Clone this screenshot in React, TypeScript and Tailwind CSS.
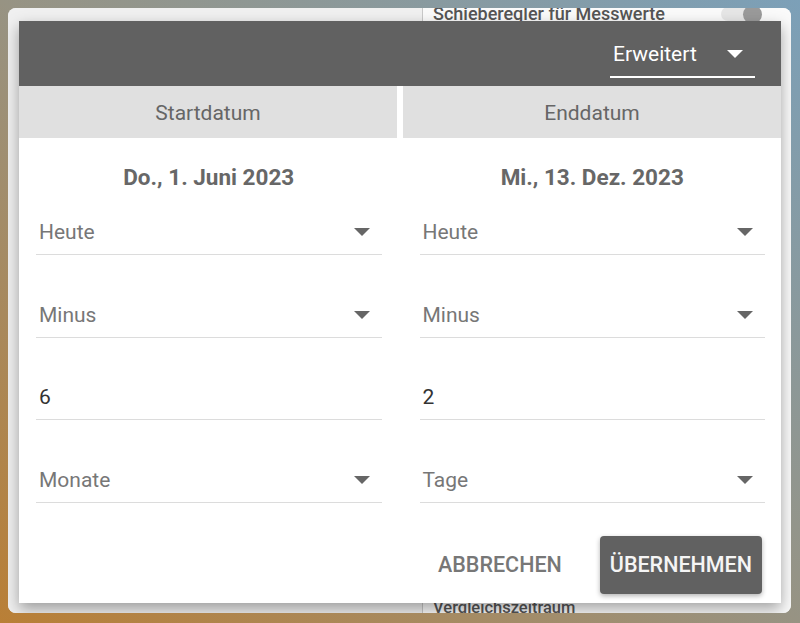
import React from "react";

function Tri({ color }: { color: string }) {
  return (
    <svg width="16" height="8" viewBox="0 0 16 8" className="shrink-0">
      <polygon points="0,0 16,0 8,8" fill={color} />
    </svg>
  );
}

function SelectField({ label }: { label: string }) {
  return (
    <div className="flex h-[35px] items-start justify-between border-b border-[#dcdcdc] pl-[3px] pr-[12px]">
      <span className="h-[24px] text-[21px] leading-[24px] text-[#777]">{label}</span>
      <div className="flex h-[24px] items-center">
        <Tri color="#666" />
      </div>
    </div>
  );
}

function InputField({ value }: { value: string }) {
  return (
    <div className="flex h-[35px] items-start border-b border-[#dcdcdc] pl-[3px]">
      <span className="h-[24px] text-[21px] leading-[24px] text-[#333]">{value}</span>
    </div>
  );
}

function Column({ title, a, b, n, unit }: { title: string; a: string; b: string; n: string; unit: string }) {
  return (
    <div className="flex flex-col">
      <div className="h-[28px] pt-[1px] text-center text-[22.5px] font-bold leading-[28px] text-[#676767]">{title}</div>
      <div className="mt-[30px] flex flex-col gap-[47.5px]">
        <SelectField label={a} />
        <SelectField label={b} />
        <InputField value={n} />
        <SelectField label={unit} />
      </div>
    </div>
  );
}

export default function App() {
  return (
    <div className="h-[623px] w-[800px] overflow-hidden bg-[linear-gradient(to_bottom_left,#7ca0b8,#979383_50%,#b97f36)] p-2 font-['Roboto',sans-serif]">
      <div className="relative h-[605px] w-[783px] overflow-hidden rounded-[8px] bg-[#f0f0f0]">
        <div className="flex h-full">
          <div className="w-[414px] bg-[#f0f0f0]" />
          <div className="flex flex-1 flex-col justify-between border-l border-[#c8c8c8] bg-[#fafafa] pl-[10px] pr-[29px]">
            <div className="-mt-[3px] flex h-[18px] items-center justify-between">
              <span className="text-[18px] font-medium leading-[18px] text-[#555]">Schieberegler für Messwerte</span>
              <div className="flex items-center">
                <span className="h-[14px] w-[26px] rounded-l-full bg-[#e6e6e6]" />
                <span className="-ml-[4px] h-[19px] w-[19px] rounded-full bg-[#9a9a9a]" />
              </div>
            </div>
            <div className="-mb-[3px] flex h-[16px] items-center">
              <span className="text-[16.5px] font-medium leading-[16px] text-[#555]">Vergleichszeitraum</span>
            </div>
          </div>
        </div>

        <div className="absolute left-[11px] top-[13px] flex h-[582px] w-[762px] flex-col bg-white shadow-[0_6px_14px_rgba(0,0,0,0.35)]">
          <div className="flex h-[65px] items-end justify-end bg-[#616161] pb-[8px] pr-[26px]">
            <div className="flex h-[47px] w-[145px] items-center justify-between border-b-2 border-white pl-[3px] pr-[12px]">
              <span className="text-[21px] leading-[24px] text-white">Erweitert</span>
              <Tri color="#ffffff" />
            </div>
          </div>
          <div className="grid h-[52px] grid-cols-2 gap-[6px] bg-white">
            <div className="flex items-center justify-center bg-[#e0e0e0] pt-[3px] text-[21px] text-[#666]">Startdatum</div>
            <div className="flex items-center justify-center bg-[#e0e0e0] pt-[3px] text-[21px] text-[#666]">Enddatum</div>
          </div>
          <div className="grid grid-cols-2 gap-x-[38px] pl-[17px] pr-[16px] pt-[24px]">
            <Column title="Do., 1. Juni 2023" a="Heute" b="Minus" n="6" unit="Monate" />
            <Column title="Mi., 13. Dez. 2023" a="Heute" b="Minus" n="2" unit="Tage" />
          </div>
          <div className="mt-auto flex items-center justify-end gap-[38px] pb-[9px] pr-[19px]">
            <span className="text-[21.5px] font-medium uppercase text-[#777]">Abbrechen</span>
            <button className="h-[58px] rounded-[4px] bg-[#616161] px-[10px] text-[21.5px] font-medium uppercase text-[#f5f5f5] shadow-[0_2px_5px_rgba(0,0,0,0.3)]">
              Übernehmen
            </button>
          </div>
        </div>
      </div>
    </div>
  );
}
